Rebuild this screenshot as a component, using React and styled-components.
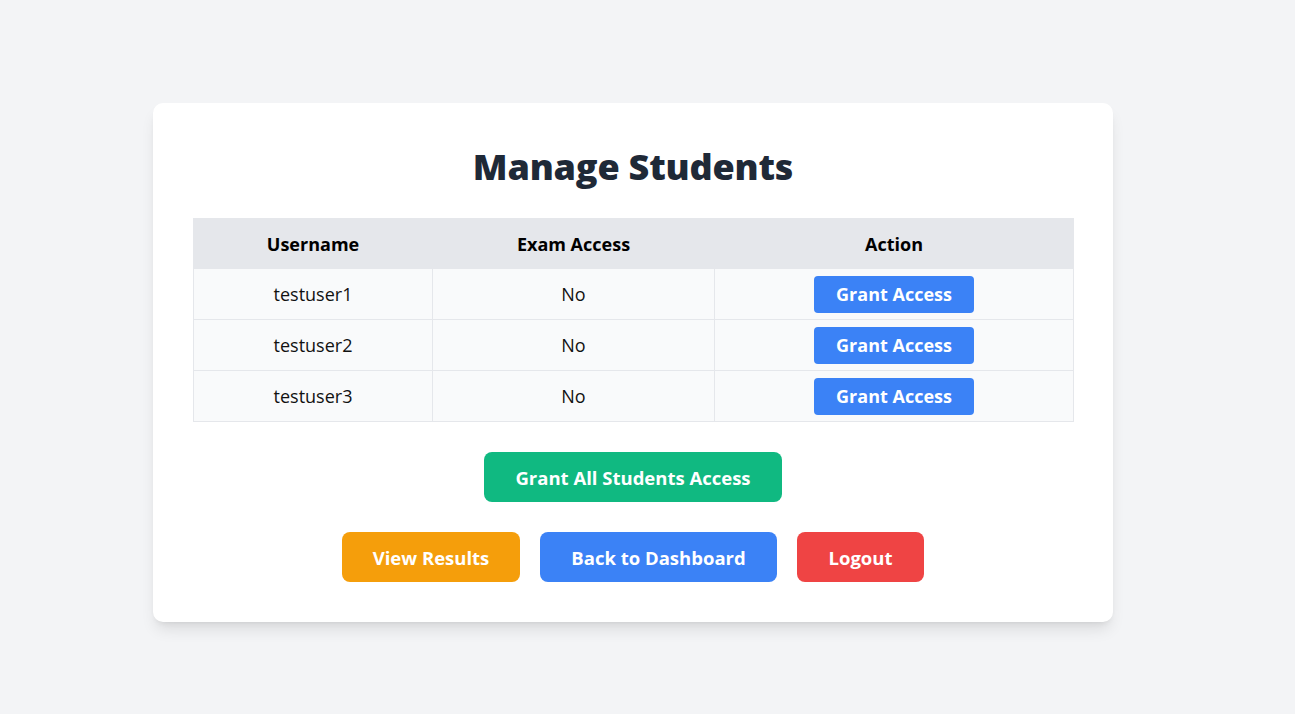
import React, { useState } from 'react';
import styled, { createGlobalStyle } from 'styled-components';

const GlobalStyle = createGlobalStyle`
  * {
    box-sizing: border-box;
  }

  body {
    margin: 0;
    background-color: #f3f4f6;
    font-family: "Open Sans", "Noto Sans", sans-serif;
  }
`;

const Page = styled.div`
  min-height: 100vh;
  display: flex;
  justify-content: center;
  align-items: flex-start;
  padding: 103px 29px 0 0;
`;

const Card = styled.div`
  width: 960px;
  padding: 40px;
  background-color: white;
  border-radius: 10px;
  box-shadow: 0 10px 15px -3px rgba(0, 0, 0, 0.1), 0 4px 6px -4px rgba(0, 0, 0, 0.1);
`;

const Title = styled.h1`
  margin: 0 0 27px;
  height: 48px;
  line-height: 48px;
  text-align: center;
  font-size: 36px;
  font-weight: 800;
  color: #1f2937;
  letter-spacing: -0.2px;
`;

const Table = styled.table`
  width: 100%;
  border-collapse: collapse;
  table-layout: fixed;
`;

const HeadCell = styled.th`
  width: ${props => props.width}px;
  height: 50px;
  padding: 0 12px;
  background-color: #e5e7eb;
  border: 1px solid #e5e7eb;
  font-size: 18px;
  font-weight: 700;
  color: #000;
  text-align: center;
`;

const Row = styled.tr`
  background-color: #f9fafb;
`;

const Cell = styled.td`
  height: 51px;
  padding: 0 12px;
  border: 1px solid #e5e7eb;
  font-size: 18px;
  color: #111;
  text-align: center;
`;

const SmallButton = styled.button`
  width: 160px;
  height: 37px;
  padding: 0;
  border: none;
  border-radius: 4px;
  background-color: #3b82f6;
  color: white;
  font-family: inherit;
  font-size: 18px;
  font-weight: 700;
  cursor: pointer;
  vertical-align: middle;
`;

const CenterRow = styled.div`
  display: flex;
  justify-content: center;
  gap: 20px;
  margin-top: ${props => props.top}px;
`;

const Button = styled.button`
  width: ${props => props.width}px;
  height: 50px;
  padding: 0;
  border: none;
  border-radius: 8px;
  background-color: ${props => props.color};
  color: white;
  font-family: inherit;
  font-size: 18.5px;
  font-weight: 700;
  cursor: pointer;
`;

const initialStudents = [
  { username: 'testuser1', access: false },
  { username: 'testuser2', access: false },
  { username: 'testuser3', access: false },
];

const App = () => {
  const [students, setStudents] = useState(initialStudents);

  const grant = name => {
    setStudents(students.map(s => (s.username === name ? { ...s, access: true } : s)));
  };

  const grantAll = () => {
    setStudents(students.map(s => ({ ...s, access: true })));
  };

  return (
    <>
      <GlobalStyle />
      <Page>
        <Card>
          <Title>Manage Students</Title>
          <Table>
            <thead>
              <tr>
                <HeadCell width={239}>Username</HeadCell>
                <HeadCell width={282}>Exam Access</HeadCell>
                <HeadCell width={359}>Action</HeadCell>
              </tr>
            </thead>
            <tbody>
              {students.map(s => (
                <Row key={s.username}>
                  <Cell>{s.username}</Cell>
                  <Cell>{s.access ? 'Yes' : 'No'}</Cell>
                  <Cell>
                    <SmallButton onClick={() => grant(s.username)}>Grant Access</SmallButton>
                  </Cell>
                </Row>
              ))}
            </tbody>
          </Table>
          <CenterRow top={30}>
            <Button width={298} color="#10b981" onClick={grantAll}>Grant All Students Access</Button>
          </CenterRow>
          <CenterRow top={30}>
            <Button width={178} color="#f59e0b">View Results</Button>
            <Button width={237} color="#3b82f6">Back to Dashboard</Button>
            <Button width={127} color="#ef4444">Logout</Button>
          </CenterRow>
        </Card>
      </Page>
    </>
  );
};

export default App;
